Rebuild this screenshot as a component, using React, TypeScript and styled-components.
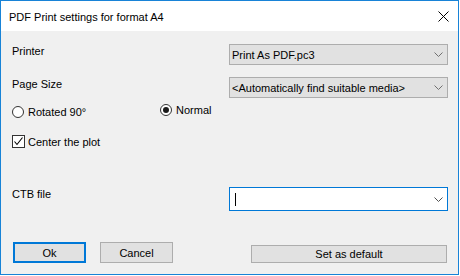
import React from "react";
import styled, { createGlobalStyle } from "styled-components";

const GlobalStyle = createGlobalStyle`
    html, body {
        margin: 0;
        padding: 0;
        background: #ffffff;
    }
    body {
        font-family: "Liberation Sans", Arial, sans-serif;
        font-size: 11px;
        color: #000000;
    }
`;

const Window = styled.div`
    width: 459px;
    height: 275px;
    box-sizing: border-box;
    border: 1px solid #1883d7;
    display: flex;
    flex-direction: column;
    background: #f0f0f0;
`;

const TitleBar = styled.div`
    height: 30px;
    flex-shrink: 0;
    background: #ffffff;
    display: flex;
    align-items: center;
    justify-content: space-between;
    padding: 0 9px 0 8px;
    font-size: 11px;
`;

const Title = styled.span`
    line-height: 14px;
    padding-top: 2px;
`;

const Body = styled.div`
    flex: 1;
    display: flex;
    flex-direction: column;
    padding: 13px 10px 11px 11px;
`;

const Row = styled.div<{ $gap: number; $align?: string }>`
    display: flex;
    align-items: ${(p) => p.$align ?? "center"};
    margin-top: ${(p) => p.$gap}px;
`;

const Label = styled.div`
    width: 217px;
    line-height: 14px;
    flex-shrink: 0;
`;

const Combo = styled.div<{ $edit?: boolean }>`
    width: 219px;
    height: ${(p) => (p.$edit ? 24 : 21)}px;
    box-sizing: border-box;
    border: 1px solid ${(p) => (p.$edit ? "#0078d7" : "#adadad")};
    background: ${(p) => (p.$edit ? "#ffffff" : "#e1e1e1")};
    display: flex;
    align-items: center;
    padding: 0 4px 0 2px;
    line-height: 14px;
`;

const ComboText = styled.span`
    flex: 1;
    white-space: nowrap;
`;

const Caret = styled.span`
    display: block;
    width: 1px;
    height: 13px;
    background: #000;
    margin-left: 3px;
`;

const Option = styled.label<{ $shift?: number }>`
    display: inline-flex;
    align-items: center;
    height: 14px;
    line-height: 14px;
    margin-top: ${(p) => p.$shift ?? 0}px;
`;

const RadioCircle = styled.span<{ $on?: boolean }>`
    width: 12px;
    height: 12px;
    box-sizing: border-box;
    border: 1px solid #333333;
    border-radius: 50%;
    background: #ffffff;
    display: flex;
    align-items: center;
    justify-content: center;
    margin-right: 4px;
    &::after {
        content: "";
        display: ${(p) => (p.$on ? "block" : "none")};
        width: 6px;
        height: 6px;
        border-radius: 50%;
        background: #1a1a1a;
    }
`;

const CheckBox = styled.span`
    width: 13px;
    height: 13px;
    box-sizing: border-box;
    border: 1px solid #333333;
    background: #ffffff;
    display: flex;
    align-items: center;
    justify-content: center;
    margin-right: 3px;
`;

const Button = styled.button<{ $primary?: boolean; $w: number; $h: number; $ml: number }>`
    width: ${(p) => p.$w}px;
    height: ${(p) => p.$h}px;
    margin-left: ${(p) => p.$ml}px;
    box-sizing: border-box;
    border: ${(p) => (p.$primary ? "2px solid #0078d7" : "1px solid #adadad")};
    background: #e1e1e1;
    font-family: "Liberation Sans", Arial, sans-serif;
    font-size: 11px;
    color: #000;
    padding: 0;
    line-height: 14px;
`;

function Chevron({ color }: { color: string }) {
    return (
        <svg width="9" height="5" viewBox="0 0 9 5">
            <polyline points="0.5,0.5 4.5,4.5 8.5,0.5" fill="none" stroke={color} strokeWidth="1" />
        </svg>
    );
}

export default function App() {
    return (
        <>
            <GlobalStyle />
            <Window>
                <TitleBar>
                    <Title>PDF Print settings for format A4</Title>
                    <svg width="11" height="11" viewBox="0 0 11 11">
                        <path d="M0.5 0.5 L10.5 10.5 M10.5 0.5 L0.5 10.5" stroke="#000" strokeWidth="1" />
                    </svg>
                </TitleBar>
                <Body>
                    <Row $gap={0} $align="flex-start">
                        <Label>Printer</Label>
                        <Combo>
                            <ComboText>Print As PDF.pc3</ComboText>
                            <Chevron color="#707070" />
                        </Combo>
                    </Row>
                    <Row $gap={12} $align="flex-start">
                        <Label>Page Size</Label>
                        <Combo>
                            <ComboText>&lt;Automatically find suitable media&gt;</ComboText>
                            <Chevron color="#707070" />
                        </Combo>
                    </Row>
                    <Row $gap={5} $align="flex-start" style={{ height: 16 }}>
                        <Option $shift={2} style={{ width: 148 }}>
                            <RadioCircle />
                            Rotated 90°
                        </Option>
                        <Option>
                            <RadioCircle $on />
                            Normal
                        </Option>
                    </Row>
                    <Row $gap={16}>
                        <Option style={{ height: 13 }}>
                            <CheckBox>
                                <svg width="11" height="11" viewBox="0 0 11 11">
                                    <polyline points="1.5,5.5 4,8.5 9.5,1.5" fill="none" stroke="#000" strokeWidth="1.1" />
                                </svg>
                            </CheckBox>
                            Center the plot
                        </Option>
                    </Row>
                    <Row $gap={39} $align="flex-start">
                        <Label>CTB file</Label>
                        <Combo $edit>
                            <ComboText>
                                <Caret />
                            </ComboText>
                            <Chevron color="#505050" />
                        </Combo>
                    </Row>
                    <Row $gap={31} $align="flex-end">
                        <Button $primary $w={73} $h={21} $ml={1}>Ok</Button>
                        <Button $w={73} $h={21} $ml={14}>Cancel</Button>
                        <Button $w={196} $h={18} $ml={78}>Set as default</Button>
                    </Row>
                </Body>
            </Window>
        </>
    );
}
